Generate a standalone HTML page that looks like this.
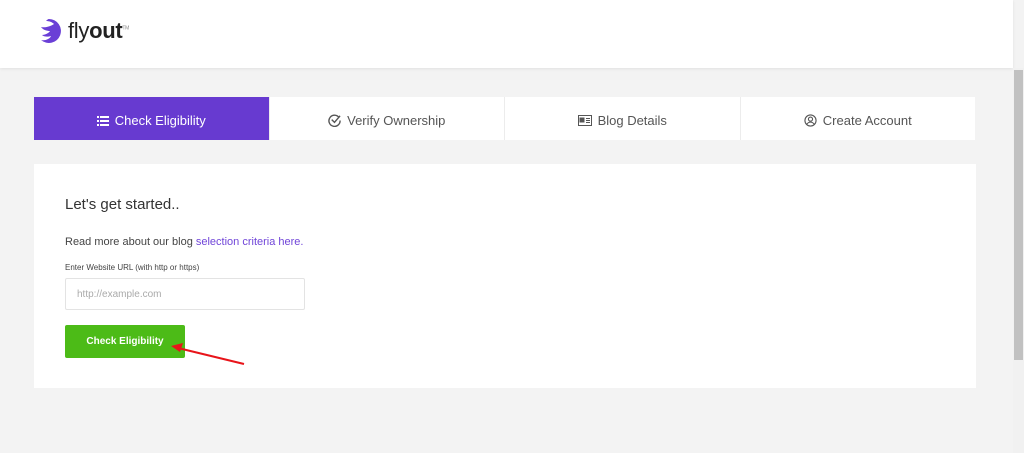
<!DOCTYPE html>
<html><head><meta charset="utf-8"><style>
*{margin:0;padding:0;box-sizing:border-box}
body{width:1024px;height:453px;overflow:hidden;background:#f3f3f3;font-family:"Liberation Sans",sans-serif;position:relative}
.hdr{position:absolute;left:0;top:0;width:1013px;height:68px;background:#fff;box-shadow:0 1px 3px rgba(0,0,0,.08)}
.logo{position:absolute;left:34px;top:16px;display:flex;align-items:center}
.logo span{font-size:22px;color:#222;margin-left:4px;letter-spacing:-0.3px}
.logo b{font-weight:700}
.sb{position:absolute;left:1013px;top:68px;width:11px;height:385px;background:#f1f1f1}
.sb i{position:absolute;left:1px;top:2px;width:9px;height:290px;background:#c1c1c1}
.tabs{position:absolute;left:34px;top:97px;width:941px;height:43px;display:flex;background:#fff}
.tab{flex:1;display:flex;align-items:center;justify-content:center;font-size:13px;color:#555;border-right:1px solid #ececec;gap:6px;padding-top:4px}
.tab:last-child{border-right:none}
.tab.act{background:#673ad0;color:#fff}
.card{position:absolute;left:34px;top:164px;width:942px;height:224px;background:#fff}
h2{position:absolute;left:31px;top:32px;font-size:15px;font-weight:400;color:#333}
.p{position:absolute;left:31px;top:72px;font-size:11px;color:#444}
.p a{color:#7045d8;text-decoration:none}
.lbl{position:absolute;left:31px;top:99px;font-size:8px;color:#444}
.inp{position:absolute;left:31px;top:114px;width:240px;height:32px;border:1px solid #e3e3e3;border-radius:2px;font-size:10px;color:#aaa;padding:10px 0 0 11px}
.btn{position:absolute;left:31px;top:161px;width:120px;height:33px;background:#4cbb17;border-radius:2px;color:#fff;font-size:10px;font-weight:700;text-align:center;line-height:33px}
</style></head><body>
<div class="hdr"><div class="logo">
<svg width="30" height="30" viewBox="0 0 30 30"><path d="M15 3a12 12 0 1 1-8 21c4 1 9-1 10-4c-3 1-7 1-9-1c3 0 7-2 8-4c-3 0-7-1-9-4c5 1 10-1 13-3c-2-2-5-3-8-3c1-1 2-2 3-2z" fill="#6a3fd6"/></svg>
<span>fly<b>out</b><sup style="font-size:5px;color:#888">TM</sup></span></div></div>
<div class="sb"><i></i></div>
<div class="tabs">
<div class="tab act"><svg width="12" height="10" viewBox="0 0 12 10" fill="#fff"><rect x="0" y="0" width="2" height="2"/><rect x="3" y="0" width="9" height="2"/><rect x="0" y="4" width="2" height="2"/><rect x="3" y="4" width="9" height="2"/><rect x="0" y="8" width="2" height="2"/><rect x="3" y="8" width="9" height="2"/></svg>Check Eligibility</div>
<div class="tab"><svg width="13" height="13" viewBox="0 0 14 14" fill="none" stroke="#555" stroke-width="1.5"><path d="M12 4A6 6 0 1 0 13 7"/><path d="M4 6l3 3 6-7"/></svg>Verify Ownership</div>
<div class="tab"><svg width="14" height="11" viewBox="0 0 14 11" fill="none" stroke="#555"><rect x=".5" y=".5" width="13" height="10"/><rect x="2" y="3" width="4" height="4" fill="#555"/><path d="M8 3.5h4M8 5.5h4M8 7.5h4"/></svg>Blog Details</div>
<div class="tab"><svg width="13" height="13" viewBox="0 0 14 14" fill="none" stroke="#555" stroke-width="1.2"><circle cx="7" cy="7" r="6"/><circle cx="7" cy="5.5" r="2.2"/><path d="M3 11c2-3 6-3 8 0"/></svg>Create Account</div>
</div>
<div class="card">
<h2>Let's get started..</h2>
<div class="p">Read more about our blog <a>selection criteria here.</a></div>
<div class="lbl">Enter Website URL (with http or https)</div>
<div class="inp">http://example.com</div>
<div class="btn">Check Eligibility</div>
</div>
<svg style="position:absolute;left:168px;top:338px" width="80" height="30" viewBox="0 0 80 30"><path d="M76 26L10 10" stroke="#e8141a" stroke-width="2"/><path d="M3 8l12-3-3 9z" fill="#e8141a"/></svg>
</body></html>
